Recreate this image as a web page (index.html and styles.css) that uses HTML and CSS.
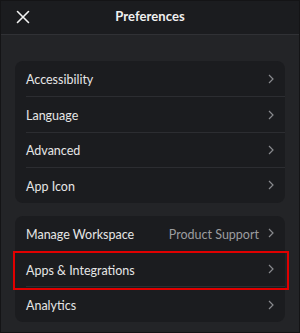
FILE: index.html
```html
<!DOCTYPE html>
<html>
<head>
<meta charset="utf-8">
<link rel="stylesheet" href="styles.css">
</head>
<body>
<div class="screen">
  <header class="topbar">
    <svg class="close" width="14" height="14" viewBox="0 0 14 14"><path d="M1.5 1.5L12.5 12.5M12.5 1.5L1.5 12.5" stroke="#f2f2f2" stroke-width="1.6" stroke-linecap="round"/></svg>
    <div class="title">Preferences</div>
  </header>
  <main class="content">
    <section class="card">
      <div class="row"><span class="label">Accessibility</span><svg class="chev" width="6" height="10" viewBox="0 0 6 10"><path d="M1 1L5 5L1 9" fill="none" stroke="#88898d" stroke-width="1.2"/></svg></div>
      <div class="row"><span class="label">Language</span><svg class="chev" width="6" height="10" viewBox="0 0 6 10"><path d="M1 1L5 5L1 9" fill="none" stroke="#88898d" stroke-width="1.2"/></svg></div>
      <div class="row"><span class="label">Advanced</span><svg class="chev" width="6" height="10" viewBox="0 0 6 10"><path d="M1 1L5 5L1 9" fill="none" stroke="#88898d" stroke-width="1.2"/></svg></div>
      <div class="row"><span class="label">App Icon</span><svg class="chev" width="6" height="10" viewBox="0 0 6 10"><path d="M1 1L5 5L1 9" fill="none" stroke="#88898d" stroke-width="1.2"/></svg></div>
    </section>
    <section class="card">
      <div class="row"><span class="label">Manage Workspace</span><span class="value">Product Support</span><svg class="chev" width="6" height="10" viewBox="0 0 6 10"><path d="M1 1L5 5L1 9" fill="none" stroke="#88898d" stroke-width="1.2"/></svg></div>
      <div class="row highlight"><span class="label">Apps &amp; Integrations</span><svg class="chev" width="6" height="10" viewBox="0 0 6 10"><path d="M1 1L5 5L1 9" fill="none" stroke="#88898d" stroke-width="1.2"/></svg></div>
      <div class="row"><span class="label">Analytics</span><svg class="chev" width="6" height="10" viewBox="0 0 6 10"><path d="M1 1L5 5L1 9" fill="none" stroke="#88898d" stroke-width="1.2"/></svg></div>
    </section>
  </main>
</div>
</body>
</html>
```
FILE: styles.css
```css
* { box-sizing: border-box; }
html, body { margin: 0; padding: 0; }
body { width: 300px; height: 333px; background: #232427; font-family: Lato, "Open Sans", sans-serif; overflow: hidden; }
.screen { width: 300px; height: 333px; border: 1px solid #141416; background: #232427; display: flex; flex-direction: column; }
.topbar { height: 34px; flex: none; background: #1b1c1f; border-bottom: 1px solid #303135; position: relative; display: flex; align-items: center; justify-content: center; padding-bottom: 3px; }
.close { position: absolute; left: 15px; top: 9px; }
.title { color: #f0f0f0; font-size: 13px; font-weight: 700; letter-spacing: 0.1px; }
.content { padding: 26px 14px 0 14px; display: flex; flex-direction: column; gap: 13px; }
.card { background: #1b1c1f; border-radius: 8px; padding-left: 11px; }
.row { height: 35.4px; display: flex; align-items: center; padding-right: 11px; padding-top: 2px; position: relative; }
.row + .row { border-top: 1px solid #2c2d31; }
.label { color: #e6e6e6; font-size: 12.5px; flex: 1; }
.value { color: #9c9c9f; font-size: 12.5px; margin-right: 9px; }
.chev { display: block; margin-top: -2px; }
.highlight::after { content: ""; position: absolute; left: -13px; right: -4px; top: -1px; bottom: -4px; border: 2px solid #e10000; pointer-events: none; }
```
